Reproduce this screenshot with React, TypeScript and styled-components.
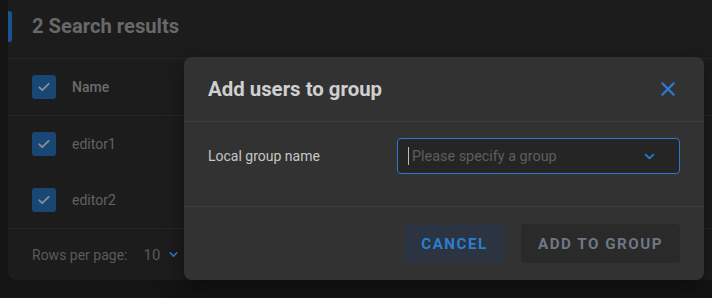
import styled, { createGlobalStyle } from 'styled-components'

const GlobalStyle = createGlobalStyle`
	html, body {
		margin: 0;
		padding: 0;
		background: #141414;
		overflow: hidden;
	}
	body {
		font-family: Roboto, 'Liberation Sans', sans-serif;
		width: 712px;
		height: 298px;
	}
`

const Page = styled.div`
	position: relative;
	width: 712px;
	height: 298px;
	padding-left: 8px;
	box-sizing: border-box;
	overflow: hidden;
`

const Card = styled.div`
	width: 740px;
	height: 280px;
	background: #1c1c1c;
	border-radius: 0 0 8px 8px;
	display: flex;
	flex-direction: column;
`

const Header = styled.div`
	display: flex;
	align-items: center;
	gap: 20px;
	padding: 10px 0 16px;
	border-bottom: 1px solid #262626;
`

const Accent = styled.div`
	width: 4px;
	height: 31px;
	background: #1b5390;
	border-radius: 0 3px 3px 0;
`

const Title = styled.h2`
	margin: 0;
	font-size: 20.2px;
	font-weight: 700;
	line-height: 31px;
	color: #686868;
	padding-top: 1px;
`

const Row = styled.div<{ $head?: boolean }>`
	display: flex;
	align-items: center;
	gap: 16px;
	height: 56px;
	padding-left: 24px;
	font-size: 14px;
	font-weight: ${p => (p.$head ? 500 : 400)};
	color: ${p => (p.$head ? '#6c6c6c' : '#626262')};
	border-bottom: ${p => (p.$head ? '1px solid #262626' : 'none')};
`

const Rows = styled.div`
	border-bottom: 1px solid #262626;
`

const Check = styled.span`
	width: 24px;
	height: 24px;
	border-radius: 3px;
	background: #184775;
	display: flex;
	align-items: center;
	justify-content: center;
`

const Footer = styled.div`
	display: flex;
	align-items: center;
	height: 51px;
	padding-left: 24px;
	font-size: 14px;
	color: #5a5a5a;
`

const PerPage = styled.span`
	margin-left: 16px;
	display: flex;
	align-items: center;
	gap: 8px;
	font-size: 15px;
`

const Modal = styled.div`
	position: absolute;
	left: 184px;
	top: 57px;
	width: 520px;
	height: 223px;
	background: #323232;
	border-radius: 8px;
	display: flex;
	flex-direction: column;
	box-shadow: 0 8px 24px rgba(0, 0, 0, 0.4);
`

const ModalHead = styled.div`
	display: flex;
	align-items: center;
	justify-content: space-between;
	height: 64px;
	padding: 0 24px;
	border-bottom: 1px solid #3d3d3d;
`

const ModalTitle = styled.h3`
	margin: 0;
	font-size: 20.4px;
	font-weight: 700;
	color: #cfcfcf;
`

const Close = styled.button`
	width: 24px;
	height: 24px;
	padding: 0;
	border: none;
	background: none;
	display: flex;
	align-items: center;
	justify-content: center;
`

const ModalBody = styled.div`
	display: grid;
	grid-template-columns: 189px 1fr;
	align-items: center;
	height: 85px;
	padding: 16px 24px 0;
	box-sizing: border-box;
	align-content: start;
	border-bottom: 1px solid #3d3d3d;
`

const Label = styled.span`
	font-size: 14px;
	color: #c6c6c6;
`

const Select = styled.div`
	height: 36px;
	box-sizing: border-box;
	border: 1px solid #2a7bd0;
	border-radius: 4px;
	background: #252525;
	display: flex;
	align-items: center;
	padding: 0 23px 0 10px;
	font-size: 14.4px;
	color: #5e5e5e;
`

const Caret = styled.span`
	width: 1px;
	height: 18px;
	background: #bbbbbb;
	margin-right: 3px;
`

const Placeholder = styled.span`
	flex: 1;
`

const ModalFoot = styled.div`
	display: flex;
	justify-content: flex-end;
	gap: 16px;
	padding: 17px 24px 0;
`

const Button = styled.button<{ $primary?: boolean }>`
	height: 39px;
	width: ${p => (p.$primary ? '101px' : '159px')};
	padding: 0;
	border: none;
	border-radius: 4px;
	font-family: Roboto, 'Liberation Sans', sans-serif;
	font-size: 15.2px;
	font-weight: 700;
	letter-spacing: 1.5px;
	background: ${p => (p.$primary ? '#2b3440' : '#2a2a2a')};
	color: ${p => (p.$primary ? '#2a7ed2' : '#6e7884')};
`

const Tick = () => (
	<svg width="14" height="14" viewBox="0 0 24 24" fill="none">
		<path d="M4 12.5l5 5L20 6.5" stroke="#8a8f95" strokeWidth="3" strokeLinecap="round" strokeLinejoin="round" />
	</svg>
)

const Chevron = ({ size = 12 }: { size?: number }) => (
	<svg width={size} height={size} viewBox="0 0 24 24" fill="none">
		<path d="M5 8.5l7 7 7-7" stroke="#2a7bd0" strokeWidth="3.4" strokeLinecap="round" strokeLinejoin="round" />
	</svg>
)

export default function App() {
	return (
		<>
			<GlobalStyle />
			<Page>
				<Card>
					<Header>
						<Accent />
						<Title>2 Search results</Title>
					</Header>
					<Row $head>
						<Check><Tick /></Check>
						Name
					</Row>
					<Rows>
						<Row>
							<Check><Tick /></Check>
							editor1
						</Row>
						<Row>
							<Check><Tick /></Check>
							editor2
						</Row>
					</Rows>
					<Footer>
						Rows per page:
						<PerPage>
							10
							<Chevron size={11} />
						</PerPage>
					</Footer>
				</Card>
				<Modal>
					<ModalHead>
						<ModalTitle>Add users to group</ModalTitle>
						<Close>
							<svg width="14" height="14" viewBox="0 0 14 14">
								<path d="M1.5 1.5l11 11M12.5 1.5l-11 11" stroke="#2a7ed2" strokeWidth="2.2" strokeLinecap="square" />
							</svg>
						</Close>
					</ModalHead>
					<ModalBody>
						<Label>Local group name</Label>
						<Select>
							<Caret />
							<Placeholder>Please specify a group</Placeholder>
							<Chevron size={13} />
						</Select>
					</ModalBody>
					<ModalFoot>
						<Button $primary>CANCEL</Button>
						<Button>ADD TO GROUP</Button>
					</ModalFoot>
				</Modal>
			</Page>
		</>
	)
}
